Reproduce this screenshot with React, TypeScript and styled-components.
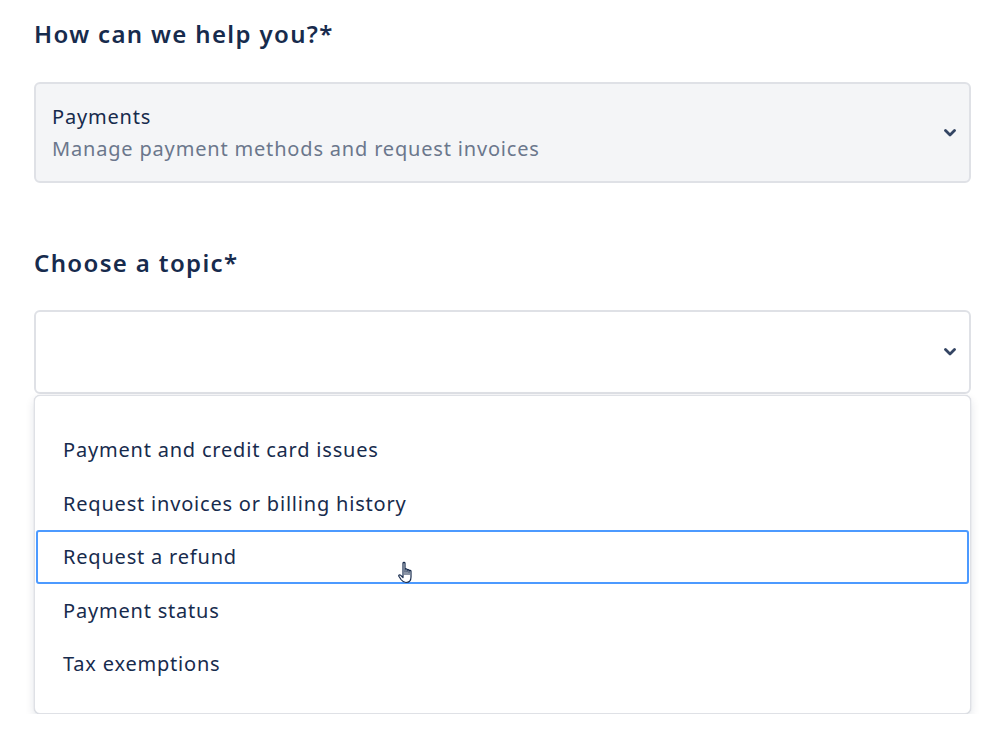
import React from "react";
import styled, { createGlobalStyle } from "styled-components";

const Global = createGlobalStyle`
  html, body { margin: 0; padding: 0; background: #ffffff; }
  body { font-family: "Noto Sans", "Open Sans", sans-serif; color: #172b4d; }
`;

const Page = styled.div`
  padding: 14px 28px 0 34px;
  display: flex;
  flex-direction: column;
`;

const Heading = styled.h2<{ $mt?: number }>`
  margin: ${(p) => p.$mt ?? 0}px 0 0 0;
  font-size: 24px;
  line-height: 40px;
  font-weight: 600;
  letter-spacing: 1.35px;
  color: #172b4d;
`;

const SelectBox = styled.div<{ $filled?: boolean; $h: number; $mt: number }>`
  margin-top: ${(p) => p.$mt}px;
  height: ${(p) => p.$h}px;
  box-sizing: border-box;
  border: 2px solid #dfe1e6;
  border-radius: 6px;
  background: ${(p) => (p.$filled ? "#f4f5f7" : "#ffffff")};
  display: flex;
  align-items: center;
  padding: 0 13px 0 16px;
`;

const Value = styled.div`
  flex: 1;
  display: flex;
  flex-direction: column;
  gap: 8px;
`;

const Title = styled.div`
  font-size: 20px;
  line-height: 24px;
  letter-spacing: 0.8px;
  color: #172b4d;
`;

const Sub = styled.div`
  font-size: 20px;
  line-height: 24px;
  letter-spacing: 0.82px;
  color: #6b778c;
`;

const Chevron = styled.svg`
  width: 12px;
  height: 8px;
  flex: none;
`;

const Menu = styled.div`
  margin-top: 1px;
  box-sizing: border-box;
  border: 1px solid #dfe1e6;
  border-radius: 6px;
  background: #ffffff;
  box-shadow: 0 4px 10px rgba(9, 30, 66, 0.12), 0 0 1px rgba(9, 30, 66, 0.25);
  padding: 27px 1px 22px 1px;
  display: flex;
  flex-direction: column;
`;

const Item = styled.div<{ $active?: boolean }>`
  position: relative;
  height: 53.5px;
  box-sizing: border-box;
  display: flex;
  align-items: center;
  padding-left: ${(p) => (p.$active ? 25 : 27)}px;
  font-size: 20px;
  letter-spacing: 0.8px;
  color: #172b4d;
  border: ${(p) => (p.$active ? "2px solid #4c9aff" : "none")};
  border-radius: 3px;
`;

const Cursor = styled.svg`
  position: absolute;
  left: 360px;
  top: 29px;
  width: 18px;
  height: 24px;
`;

const ChevronIcon = () => (
  <Chevron viewBox="0 0 12 8">
    <path d="M1.5 1.5 L6 6 L10.5 1.5" fill="none" stroke="#344563" strokeWidth="2.8" strokeLinecap="round" strokeLinejoin="round" />
  </Chevron>
);

const items = [
  "Payment and credit card issues",
  "Request invoices or billing history",
  "Request a refund",
  "Payment status",
  "Tax exemptions",
];

export default function App() {
  return (
    <>
      <Global />
      <Page>
        <Heading>How can we help you?*</Heading>
        <SelectBox $filled $h={101} $mt={28}>
          <Value>
            <Title>Payments</Title>
            <Sub>Manage payment methods and request invoices</Sub>
          </Value>
          <ChevronIcon />
        </SelectBox>
        <Heading $mt={60}>Choose a topic*</Heading>
        <SelectBox $h={84} $mt={27}>
          <Value />
          <ChevronIcon />
        </SelectBox>
        <Menu>
          {items.map((t, i) => (
            <Item key={t} $active={i === 2}>
              {t}
              {i === 2 && (
                <Cursor viewBox="0 0 18 24">
                  <path
                    d="M5 2.2 C5 1.2 7 1.2 7 2.2 V10 V8.6 C7 7.6 9 7.6 9 8.6 V10.5 V9.4 C9 8.4 11 8.4 11 9.4 V11 V10.2 C11 9.2 13 9.2 13 10.2 V16 C13 19.5 11 21.5 8 21.5 C5.5 21.5 4.5 20.5 3 18.5 L0.9 15.2 C0.4 14.3 1.6 13.3 2.5 14.1 L5 16.5 Z"
                    fill="#ffffff"
                    stroke="#172b4d"
                    strokeWidth="1.2"
                    strokeLinejoin="round"
                  />
                  <path d="M7 10 V14 M9 10.5 V14 M11 11 V14" stroke="#172b4d" strokeWidth="1" />
                </Cursor>
              )}
            </Item>
          ))}
        </Menu>
      </Page>
    </>
  );
}
